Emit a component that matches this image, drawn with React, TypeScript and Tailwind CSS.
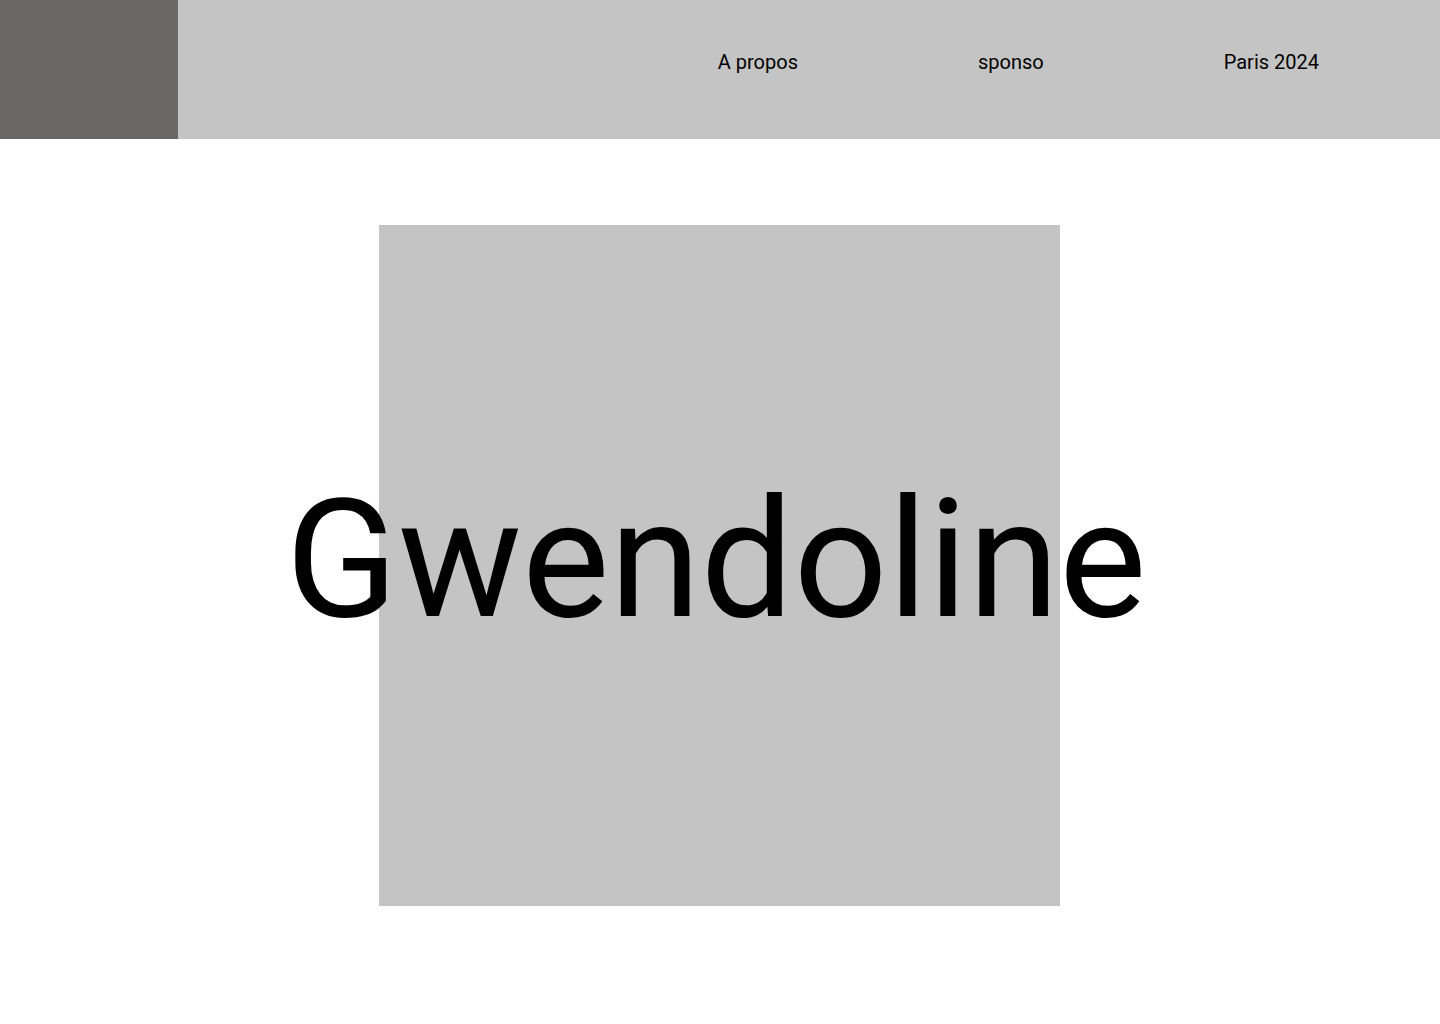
export default function App() {
    const navLinks = ["A propos", "sponso", "Paris 2024"];

    return (
        <div className="min-h-screen bg-white font-['Roboto',sans-serif] text-black">
            <header className="flex h-[139px] bg-[#c4c4c4]">
                <div className="w-[178px] bg-[#6b6766]" />
                <nav className="flex flex-1 items-start justify-end gap-[180px] pr-[121px] pt-[50px] text-[20px] leading-[24px]">
                    {navLinks.map((label) => (
                        <a key={label} href="#">
                            {label}
                        </a>
                    ))}
                </nav>
            </header>

            <main className="flex justify-center pt-[86px] pr-px">
                <div className="flex h-[681px] w-[681px] items-center justify-center bg-[#c4c4c4] pr-[7px]">
                    <h1 className="-mt-[13px] whitespace-nowrap text-[165px] leading-none font-normal">
                        Gwendoline
                    </h1>
                </div>
            </main>
        </div>
    );
}
